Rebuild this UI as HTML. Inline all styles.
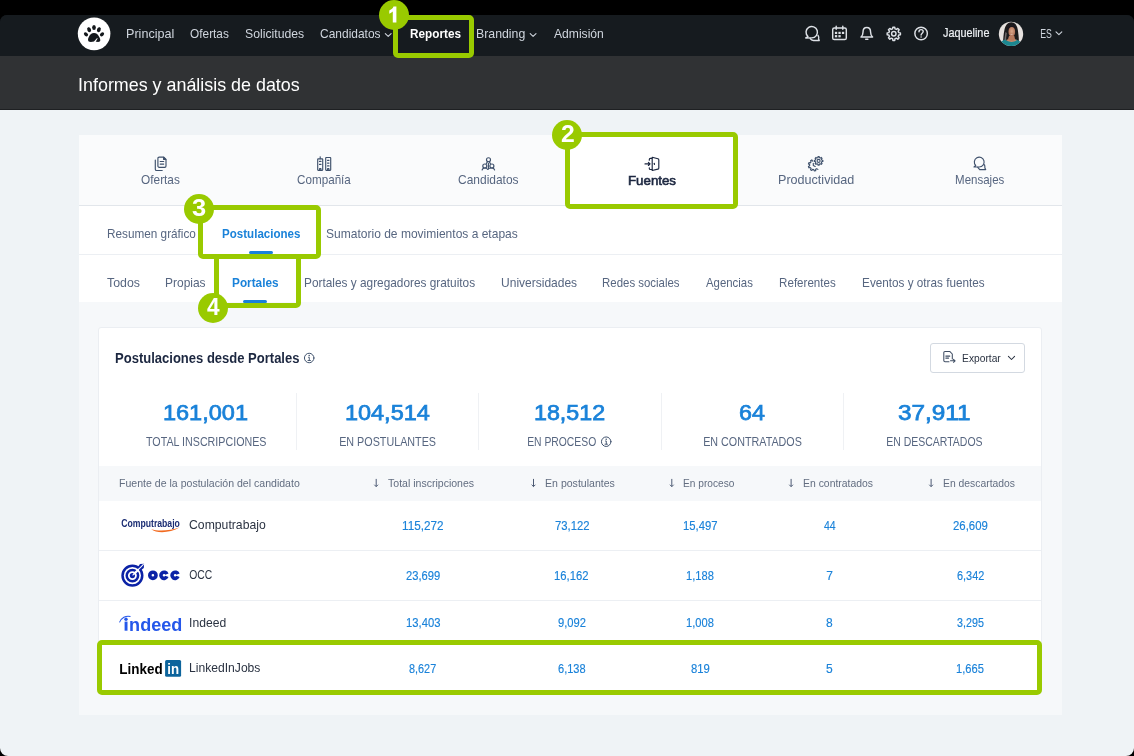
<!DOCTYPE html>
<html lang="es"><head><meta charset="utf-8"><title>Informes y análisis de datos</title>
<style>
*{box-sizing:border-box;margin:0;padding:0}
html,body{width:1134px;height:756px;overflow:hidden;background:#000;font-family:"Liberation Sans",sans-serif}
.a{position:absolute}
.win{position:absolute;left:0;top:15px;width:1134px;height:741px;background:linear-gradient(#161b1f 0,#161b1f 41px,#303234 41px,#303234 95px,#eff3f6 95px);border-radius:7px 7px 8px 8px;overflow:hidden}
.nav{position:absolute;left:0;top:0;width:1134px;height:41px;background:#161b1f}
.hdr{position:absolute;left:0;top:41px;width:1134px;height:54px;background:#303234;border-bottom:1px solid #1e2022}
.t{position:absolute;white-space:pre;line-height:20px;height:20px}
.card{position:absolute;left:79px;top:135px;width:983px;height:580px;background:#f6f8fa}
.tabs{position:absolute;left:79px;top:135px;width:983px;height:71px;background:#fafbfc;border-bottom:1px solid #e2e6eb}
.tabact{position:absolute;left:570.2px;top:134.7px;width:163.6px;height:70.3px;background:#fff}
.row2{position:absolute;left:79px;top:206px;width:983px;height:49px;background:#fff;border-bottom:1px solid #eceff3}
.row3{position:absolute;left:79px;top:255px;width:983px;height:47px;background:#fff}
.inner{position:absolute;left:98px;top:327px;width:944px;height:364px;background:#fff;border:1px solid #ebeef2;border-radius:3px}
.div{position:absolute;top:393px;width:1px;height:57px;background:#eff1f4}
.thead{position:absolute;left:99px;top:466px;width:942px;height:35px;background:#f6f8fa}
.sep{position:absolute;left:99px;width:942px;height:1px;background:#eceff3}
.ul{position:absolute;height:3px;border-radius:1.5px;background:#1a82d9}
.btn{position:absolute;left:930px;top:343.2px;width:95px;height:29.7px;border:1px solid #d3d9e1;border-radius:3px;background:#fff}
.gb{position:absolute;border:5px solid #99ca00;border-radius:5px}
.bd{position:absolute;width:30.2px;height:30.2px;border-radius:50%;background:#99ca00;color:#fff;font-weight:700;font-size:23.4px;line-height:27.8px;text-align:center}
</style></head><body>
<div class="win">
  <div class="nav"></div>
  <div class="hdr"></div>
</div>
<div class="card"></div>
<div class="tabs"></div>
<div class="tabact"></div>
<div class="row2"></div>
<div class="row3"></div>
<div class="inner"></div>
<div class="div" style="left:296.3px"></div>
<div class="div" style="left:478.1px"></div>
<div class="div" style="left:660.5px"></div>
<div class="div" style="left:842.8px"></div>
<div class="thead"></div>
<div class="sep" style="top:549.7px"></div>
<div class="sep" style="top:599.7px"></div>
<div class="ul" style="left:249.2px;top:251.2px;width:23.6px"></div>
<div class="ul" style="left:243.3px;top:300px;width:23.7px"></div>
<div class="btn"></div>
<svg class="a" style="left:0;top:0;will-change:transform" width="1134" height="756" viewBox="0 0 1134 756" fill="none">
<!-- logo -->
<circle cx="94.1" cy="33.85" r="16.3" fill="#fff"/>
<g fill="#14181c">
<ellipse cx="94" cy="27.5" rx="1.85" ry="2.6"/>
<ellipse cx="89.1" cy="29.7" rx="1.85" ry="2.55" transform="rotate(-22 89.1 29.6)"/>
<ellipse cx="98.9" cy="29.7" rx="1.85" ry="2.55" transform="rotate(22 98.9 29.6)"/>
<ellipse cx="85.9" cy="34.4" rx="1.7" ry="2.35" transform="rotate(-50 85.9 34.3)"/>
<ellipse cx="102.1" cy="34.4" rx="1.7" ry="2.35" transform="rotate(50 102.1 34.3)"/>
<path d="M94 33c2.4 0 4.2 1.6 5.4 4.2c.9 1.9 1.2 3.3.6 4.1c-.7.9-2.4.7-4.3.5l1.9-3.4l-.5-.4l-3.1 3.6c-1.700.200-4.200.600-5.300-.200c-1-.800-.800-2.400.100-4.300C90 34.500 91.700 33 94 33z"/>
</g>
<!-- nav chevrons -->
<g stroke="#cfd5dd" stroke-width="1.1" stroke-linecap="round" stroke-linejoin="round">
<path d="M385.300 33.600l2.900 2.800l2.900-2.800"/>
<path d="M530.200 33.600l2.900 2.800l2.900-2.800"/>
<path d="M1056 31.800l2.900 2.900l2.900-2.900"/>
</g>
<!-- nav icons -->
<g stroke="#dde1e6" stroke-width="1.45" stroke-linecap="round" stroke-linejoin="round">
<!-- chat -->
<path d="M808 36.500A5.700 5.700 0 1 1 811.800 37.900L805.800 37.900Z"/>
<path d="M818 35.300Q819.300 37.300 818.600 38.900L819.200 40.500L813.500 40.500Q811.300 40.300 810.200 38.600"/>
<!-- calendar -->
<rect x="832.700" y="28" width="13.600" height="11.500" rx="1.600"/>
<path d="M836.200 26.200v3M842.800 26.200v3"/>
<!-- bell -->
<path d="M861 37h11.600c-1.600-1.300-2-2.700-2-4.800c0-2.700-1.500-4.700-3.800-4.700s-3.800 2-3.800 4.700c0 2.100-.4 3.500-2 4.800z"/>
<path d="M865.700 39.200h2.200"/>
<!-- help -->
<circle cx="921.100" cy="33.500" r="6.250"/>
<path d="M919 31.700c0-1.300 1-2.100 2.100-2.100s2.100.8 2.100 2c0 1.500-2.100 1.700-2.100 3.400"/>
</g>
<g fill="#dde1e6">
<rect x="834.900" y="31.800" width="2.300" height="2.200"/><rect x="838.400" y="31.800" width="2.300" height="2.200"/><rect x="841.900" y="31.800" width="2.300" height="2.200"/>
<rect x="834.900" y="35.100" width="2.300" height="2.200"/><rect x="838.400" y="35.100" width="2.300" height="2.200"/>
<circle cx="921.100" cy="37" r=".8"/>
</g>
<!-- gear -->
<g stroke="#dde1e6" stroke-width="1.450" stroke-linejoin="round">
<circle cx="893.800" cy="33.800" r="2.200"/>
<path d="M898.76 32.61L900.43 32.86L900.43 34.74L898.76 34.99L898.15 36.46L899.16 37.82L897.82 39.16L896.46 38.15L894.99 38.76L894.74 40.43L892.86 40.43L892.61 38.76L891.14 38.15L889.78 39.16L888.44 37.82L889.45 36.46L888.84 34.99L887.17 34.74L887.17 32.86L888.84 32.61L889.45 31.14L888.44 29.78L889.78 28.44L891.14 29.45L892.61 28.84L892.86 27.17L894.74 27.17L894.99 28.84L896.46 29.45L897.82 28.44L899.16 29.78L898.15 31.14Z"/>
</g>
<!-- avatar -->
<defs>
<clipPath id="av"><circle cx="1011" cy="33.900" r="12.200"/></clipPath>
<filter id="bl" x="-20%" y="-20%" width="140%" height="140%"><feGaussianBlur stdDeviation=".55"/></filter>
<radialGradient id="fc" cx=".5" cy=".45" r=".6"><stop offset="0" stop-color="#dba789"/><stop offset="1" stop-color="#a96a50"/></radialGradient>
</defs>
<g clip-path="url(#av)">
<rect x="997" y="20" width="28" height="28" fill="#e6e1de"/>
<g filter="url(#bl)">
<path d="M1003 44c.200-5 .500-10 1.400-14c1-4.800 3.300-7.800 6.900-7.800s5.800 3 6.500 7.500c.600 4.300 1.300 9 1 14.300z" fill="#1e1a1b"/>
<path d="M1004.300 42c.200-3 .600-7 1.200-10l1.300 1c-.500 3-.800 6-.800 9z" fill="#6f6a6b"/>
<ellipse cx="1011.800" cy="31.700" rx="3.300" ry="4.800" fill="url(#fc)"/>
<path d="M1007.600 30c.300-3.800 1.800-5.600 4-5.600s3.500 1.600 3.900 4.600c-1.300-1.600-2.800-2.400-4.300-2.400s-2.800 1.200-3.600 3.400z" fill="#1e1a1b"/>
<path d="M1009.700 33.900q1.900 1.300 3.800 0q-1.900 2.100-3.800 0z" fill="#f6ece8"/>
<path d="M1009 36h5.300l1.200 5h-8z" fill="#b87a5d"/>
<path d="M998 48c.500-5 3-7.300 7.500-8.500c1.500 2 8.500 2 10.500 0c4 1.200 6.500 3.500 7 8.500z" fill="#1f8790"/>
<path d="M1007 39.300q4.300 2.700 9 0l.6 1.300q-5 2.800-10.200 0z" fill="#c58b6d"/>
</g>
</g>
<!-- tab icons -->
<g stroke="#3f516c" stroke-width="1.150" stroke-linecap="round" stroke-linejoin="round">
<!-- ofertas -->
<path d="M159.200 157.100h4.600l2.200 2.200v6.700a1.300 1.300 0 0 1-1.300 1.300h-5.500a1.300 1.300 0 0 1-1.300-1.300v-7.600a1.300 1.300 0 0 1 1.300-1.300z"/>
<path d="M163.600 157.300v2.200h2.200z" fill="#3f516c"/>
<path d="M160.200 161.500h3.500M160.200 164.100h3.500"/>
<path d="M155.300 160v9.200a1.300 1.300 0 0 0 1.300 1.300h5.600"/>
<!-- compania -->
<rect x="317.700" y="158.800" width="5" height="11.500" rx=".5"/>
<rect x="325.700" y="157.500" width="5" height="12.800" rx=".5"/>
<path d="M320.200 156.700v2"/>
<path d="M319.500 161.400h1.500M319.500 164.400h1.500M327.500 160.300h1.500M327.500 163.100h1.500M327.500 165.900h1.500"/>
<path d="M319.600 170v-1.500h1.300v1.500M327.600 170v-1.500h1.300v1.500"/>
<!-- candidatos -->
<circle cx="488.500" cy="159.700" r="2"/>
<circle cx="484.800" cy="166" r="2"/>
<circle cx="491.900" cy="166" r="2"/>
<path d="M486.300 163.600l1.300-2.100M490.400 163.600l-1.300-2.100M488.400 163.200v5.600"/>
<path d="M482.100 170c.3-1.300 1.400-2 2.700-2s2.400.7 2.900 1.500c.5-.8 2.500-1.500 4.200-1.500c1.300 0 2.400.7 2.700 2"/>
<!-- productividad -->
<circle cx="818.600" cy="160.900" r="1.500"/>
<path d="M821.81 160.13L822.86 160.29L822.86 161.51L821.81 161.67L821.41 162.62L822.04 163.48L821.18 164.34L820.32 163.71L819.37 164.11L819.21 165.16L817.99 165.16L817.83 164.11L816.88 163.71L816.02 164.34L815.16 163.48L815.79 162.62L815.39 161.67L814.34 161.51L814.34 160.29L815.39 160.13L815.79 159.18L815.16 158.32L816.02 157.46L816.88 158.09L817.83 157.69L817.99 156.64L819.21 156.64L819.37 157.69L820.32 158.09L821.18 157.46L822.04 158.32L821.41 159.18Z"/>
<path d="M817.87 169.38L816.71 168.67L815.65 169.28L815.69 170.65L814.28 170.89L813.85 169.60L812.64 169.38L811.79 170.45L810.55 169.74L811.06 168.47L810.27 167.53L808.93 167.81L808.44 166.46L809.64 165.81L809.64 164.59L808.44 163.94L808.93 162.59L810.27 162.87L811.06 161.93L810.55 160.66L811.79 159.95L812.64 161.02"/>
<path d="M813.300 163.300v2.300l1.900.9"/>
<!-- mensajes -->
<path d="M975.700 165.500A4.900 4.900 0 1 1 979.200 167L974 167Z"/>
<path d="M984.500 164.700Q985 166.500 984.900 168L985.700 169.600L979.700 169.600L977.800 167.300"/>
</g>
<!-- fuentes (dark) -->
<g stroke="#1c2740" stroke-width="1.150" stroke-linecap="round" stroke-linejoin="round">
<path d="M652.200 157.200l5.700 1.500a1.200 1.200 0 0 1 .9 1.200v8a1.200 1.200 0 0 1-.9 1.200l-5.700 1.400z"/>
<path d="M651.800 158.400h-1.500a1 1 0 0 0-1 1v.8M651.800 169.500h-1.500a1 1 0 0 1-1-1v-.8"/>
<path d="M645 163.900h4.800M648.400 162.300l1.700 1.600l-1.700 1.600"/>
<path d="M654.400 163.300v1.200"/>
</g>
<!-- info icons -->
<g stroke="#3f516c" stroke-width="1" stroke-linecap="round">
<circle cx="309.200" cy="358" r="4.750"/>
<path d="M308.500 357.300h.8v3.100M308 360.500h2.500" stroke-width=".9"/>
<circle cx="606.200" cy="441.700" r="4.750"/>
<path d="M605.500 441h.8v3.100M605 444.200h2.500" stroke-width=".9"/>
</g>
<circle cx="309.200" cy="355.600" r=".75" fill="#3f516c"/>
<circle cx="606.200" cy="439.300" r=".75" fill="#3f516c"/>
<!-- export -->
<g stroke="#3f4d63" stroke-width="1.050" stroke-linecap="round" stroke-linejoin="round">
<path d="M952.300 359v-5l-2.600-2.600h-4.700a1.200 1.200 0 0 0-1.200 1.200v8a1.200 1.200 0 0 0 1.200 1.200h4"/>
<path d="M945.800 356.100h4M945.800 358.100h2.800"/>
<path d="M950.500 360.800h4.500M953.500 359.300l1.600 1.500l-1.600 1.500"/>
<path d="M1008.400 356.400l3.100 3.100l3.100-3.100" stroke="#2b3342"/>
</g>
<!-- sort arrows -->
<g stroke="#4d5b74" stroke-width="1" stroke-linecap="round" stroke-linejoin="round">
<path d="M376.200 479.300v7M374.600 485l1.600 1.600l1.600-1.600"/>
<path d="M533.500 479.300v7M531.900 485l1.600 1.600l1.600-1.600"/>
<path d="M671.800 479.300v7M670.200 485l1.600 1.600l1.600-1.600"/>
<path d="M791.100 479.300v7M789.500 485l1.600 1.600l1.600-1.600"/>
<path d="M931.100 479.300v7M929.500 485l1.600 1.600l1.600-1.600"/>
</g>
<!-- Computrabajo logo -->
<text x="121.200" y="527.200" font-family="Liberation Sans, sans-serif" font-weight="700" font-size="10.200" fill="#1b2d73" textLength="58.700" lengthAdjust="spacingAndGlyphs">Computrabajo</text>
<path d="M151.200 529.300C157 533.600 170 533.100 179.800 527.300C170 531 158 531.300 151.200 529.300z" fill="#f26a1f"/>
<!-- OCC logo -->
<g stroke="#0b22a6" fill="none">
<circle cx="132.400" cy="575.600" r="9.850" stroke-width="2.500"/>
<circle cx="132.400" cy="575.600" r="5.700" stroke-width="2.500"/>
<circle cx="132.400" cy="575.600" r="2.600" fill="#0b22a6" stroke="none"/>
<path d="M134 574L142 566" stroke="#fff" stroke-width="2.100"/>
<path d="M137.700 567.300l2.300-3.300l4.100-.300l-.300 4.300l-3.200 2.400l-1.500-.200z" fill="#0b22a6" stroke="none"/>
<path d="M132.600 575.400L143.700 564.200" stroke="#fff" stroke-width="1.050"/>
<circle cx="152.900" cy="575.300" r="3.100" stroke-width="3.600"/>
<path d="M166.900 574.150a3.100 3.100 0 1 0 0 2.300" stroke-width="3.600"/>
<path d="M178 574.150a3.100 3.100 0 1 0 0 2.300" stroke-width="3.600"/>
</g>
<!-- indeed logo -->
<text x="129.100" y="630.700" font-family="Liberation Sans, sans-serif" font-weight="700" font-size="17.800" fill="#2557ea" textLength="53.200" lengthAdjust="spacingAndGlyphs">ndeed</text>
<rect x="124.600" y="621.600" width="2.900" height="9.100" fill="#2557ea"/>
<circle cx="126" cy="619.300" r="1.700" fill="#2557ea"/>
<path d="M119.500 622.400c1.700-4.500 6.300-7.200 11-5.900" stroke="#2557ea" stroke-width="1.050"/>
<!-- linkedin logo -->
<text x="119.300" y="673.600" font-family="Liberation Sans, sans-serif" font-weight="700" font-size="14.600" fill="#000" textLength="43.300" lengthAdjust="spacingAndGlyphs">Linked</text>
<rect x="165.100" y="660" width="16" height="16.700" rx="1.500" fill="#0d649c"/>
<text x="167.300" y="673.600" font-family="Liberation Sans, sans-serif" font-weight="700" font-size="14.600" fill="#fff" textLength="11.800" lengthAdjust="spacingAndGlyphs">in</text>
</svg>

<div class="a" style="left:0;top:0;width:1134px;height:756px;will-change:transform">
<span class="t" style="left:125.60px;top:23.50px;font-size:13px;font-weight:400;color:#cfd5dd;transform:scaleX(0.9670);transform-origin:1.00px 0;">Principal</span>
<span class="t" style="left:189.61px;top:23.50px;font-size:13px;font-weight:400;color:#cfd5dd;transform:scaleX(0.9095);transform-origin:0.83px 0;">Ofertas</span>
<span class="t" style="left:244.57px;top:23.50px;font-size:13px;font-weight:400;color:#cfd5dd;transform:scaleX(0.9412);transform-origin:0.95px 0;">Solicitudes</span>
<span class="t" style="left:319.65px;top:23.50px;font-size:13px;font-weight:400;color:#cfd5dd;transform:scaleX(0.9189);transform-origin:0.85px 0;">Candidatos</span>
<span class="t" style="left:476.21px;top:23.50px;font-size:13px;font-weight:400;color:#cfd5dd;transform:scaleX(0.9459);transform-origin:1.00px 0;">Branding</span>
<span class="t" style="left:554.40px;top:23.50px;font-size:13px;font-weight:400;color:#cfd5dd;transform:scaleX(0.9321);transform-origin:0.00px 0;">Admisión</span>
<span class="t" style="left:409.92px;top:23.94px;font-size:12.3px;font-weight:700;color:#ffffff;transform:scaleX(0.9559);transform-origin:0.91px 0;">Reportes</span>
<span class="t" style="left:943.40px;top:23.34px;font-size:12px;font-weight:400;color:#eef1f4;transform:scaleX(0.9035);transform-origin:0.00px 0;-webkit-text-stroke:0.2px #eef1f4;">Jaqueline</span>
<span class="t" style="left:1039.51px;top:23.84px;font-size:12px;font-weight:400;color:#cfd5dd;transform:scaleX(0.7271);transform-origin:0.99px 0;">ES</span>
<span class="t" style="left:78.19px;top:74.59px;font-size:18.5px;font-weight:400;color:#ffffff;transform:scaleX(0.9666);transform-origin:1.85px 0;">Informes y análisis de datos</span>
<span class="t" style="left:141.01px;top:169.50px;font-size:13px;font-weight:400;color:#576680;transform:scaleX(0.9099);transform-origin:0.83px 0;">Ofertas</span>
<span class="t" style="left:296.90px;top:169.50px;font-size:13px;font-weight:400;color:#576680;transform:scaleX(0.8958);transform-origin:0.85px 0;">Compañía</span>
<span class="t" style="left:457.85px;top:169.50px;font-size:13px;font-weight:400;color:#576680;transform:scaleX(0.9189);transform-origin:0.85px 0;">Candidatos</span>
<span class="t" style="left:777.60px;top:169.50px;font-size:13px;font-weight:400;color:#576680;transform:scaleX(0.9667);transform-origin:1.00px 0;">Productividad</span>
<span class="t" style="left:954.75px;top:169.50px;font-size:13px;font-weight:400;color:#576680;transform:scaleX(0.8840);transform-origin:1.00px 0;">Mensajes</span>
<span class="t" style="left:628.38px;top:170.50px;font-size:13px;font-weight:400;color:#1c2740;transform:scaleX(1.0222);transform-origin:0.88px 0;-webkit-text-stroke:0.6px #1c2740;">Fuentes</span>
<span class="t" style="left:107.13px;top:223.50px;font-size:13px;font-weight:400;color:#576680;transform:scaleX(0.9033);transform-origin:1.00px 0;">Resumen gráfico</span>
<span class="t" style="left:221.98px;top:223.70px;font-size:12.4px;font-weight:700;color:#1a82d9;transform:scaleX(0.9329);transform-origin:0.91px 0;">Postulaciones</span>
<span class="t" style="left:325.78px;top:223.50px;font-size:13px;font-weight:400;color:#576680;transform:scaleX(0.9243);transform-origin:0.95px 0;">Sumatorio de movimientos a etapas</span>
<span class="t" style="left:106.80px;top:272.50px;font-size:13px;font-weight:400;color:#576680;transform:scaleX(0.9491);transform-origin:0.00px 0;">Todos</span>
<span class="t" style="left:165.45px;top:272.50px;font-size:13px;font-weight:400;color:#576680;transform:scaleX(0.9191);transform-origin:1.00px 0;">Propias</span>
<span class="t" style="left:304.31px;top:272.50px;font-size:13px;font-weight:400;color:#576680;transform:scaleX(0.9100);transform-origin:1.00px 0;">Portales y agregadores gratuitos</span>
<span class="t" style="left:500.85px;top:272.50px;font-size:13px;font-weight:400;color:#576680;transform:scaleX(0.9229);transform-origin:1.00px 0;">Universidades</span>
<span class="t" style="left:602.40px;top:272.50px;font-size:13px;font-weight:400;color:#576680;transform:scaleX(0.8778);transform-origin:1.00px 0;">Redes sociales</span>
<span class="t" style="left:706.20px;top:272.50px;font-size:13px;font-weight:400;color:#576680;transform:scaleX(0.8758);transform-origin:0.00px 0;">Agencias</span>
<span class="t" style="left:778.76px;top:272.50px;font-size:13px;font-weight:400;color:#576680;transform:scaleX(0.8892);transform-origin:1.00px 0;">Referentes</span>
<span class="t" style="left:861.72px;top:272.50px;font-size:13px;font-weight:400;color:#576680;transform:scaleX(0.9018);transform-origin:1.00px 0;">Eventos y otras fuentes</span>
<span class="t" style="left:231.91px;top:272.70px;font-size:12.4px;font-weight:700;color:#1a82d9;transform:scaleX(0.9510);transform-origin:0.91px 0;">Portales</span>
<span class="t" style="left:115.24px;top:348.62px;font-size:13.8px;font-weight:700;color:#1c2740;transform:scaleX(0.9431);transform-origin:0.96px 0;">Postulaciones desde Portales</span>
<span class="t" style="left:962.13px;top:348.19px;font-size:11px;font-weight:400;color:#2b3342;transform:scaleX(0.9300);transform-origin:0.95px 0;">Exportar</span>
<span class="t" style="left:163.40px;top:403.27px;font-size:22.3px;font-weight:400;color:#1a82d9;transform:scaleX(1.0554);transform-origin:1.00px 0;-webkit-text-stroke:0.75px #1a82d9;">161,001</span>
<span class="t" style="left:345.40px;top:403.27px;font-size:22.3px;font-weight:400;color:#1a82d9;transform:scaleX(1.0528);transform-origin:1.00px 0;-webkit-text-stroke:0.75px #1a82d9;">104,514</span>
<span class="t" style="left:534.40px;top:403.27px;font-size:22.3px;font-weight:400;color:#1a82d9;transform:scaleX(1.0434);transform-origin:1.00px 0;-webkit-text-stroke:0.75px #1a82d9;">18,512</span>
<span class="t" style="left:739.45px;top:403.27px;font-size:22.3px;font-weight:400;color:#1a82d9;transform:scaleX(1.0462);transform-origin:0.89px 0;-webkit-text-stroke:0.75px #1a82d9;">64</span>
<span class="t" style="left:898.10px;top:403.27px;font-size:22.3px;font-weight:400;color:#1a82d9;transform:scaleX(1.0906);transform-origin:0.84px 0;-webkit-text-stroke:0.75px #1a82d9;">37,911</span>
<span class="t" style="left:145.80px;top:431.83px;font-size:12.6px;font-weight:400;color:#576680;transform:scaleX(0.8495);transform-origin:0.00px 0;">TOTAL INSCRIPCIONES</span>
<span class="t" style="left:339.40px;top:431.83px;font-size:12.6px;font-weight:400;color:#576680;transform:scaleX(0.8547);transform-origin:1.00px 0;">EN POSTULANTES</span>
<span class="t" style="left:527.20px;top:431.83px;font-size:12.6px;font-weight:400;color:#576680;transform:scaleX(0.8221);transform-origin:1.00px 0;">EN PROCESO</span>
<span class="t" style="left:703.20px;top:431.83px;font-size:12.6px;font-weight:400;color:#576680;transform:scaleX(0.8533);transform-origin:1.00px 0;">EN CONTRATADOS</span>
<span class="t" style="left:886.00px;top:431.83px;font-size:12.6px;font-weight:400;color:#576680;transform:scaleX(0.8333);transform-origin:1.00px 0;">EN DESCARTADOS</span>
<span class="t" style="left:118.87px;top:473.15px;font-size:11.1px;font-weight:400;color:#626d80;transform:scaleX(0.9514);transform-origin:0.95px 0;">Fuente de la postulación del candidato</span>
<span class="t" style="left:388.40px;top:473.15px;font-size:11.1px;font-weight:400;color:#626d80;transform:scaleX(0.9498);transform-origin:0.00px 0;">Total inscripciones</span>
<span class="t" style="left:545.08px;top:473.15px;font-size:11.1px;font-weight:400;color:#626d80;transform:scaleX(0.9509);transform-origin:0.95px 0;">En postulantes</span>
<span class="t" style="left:682.78px;top:473.15px;font-size:11.1px;font-weight:400;color:#626d80;transform:scaleX(0.9132);transform-origin:0.95px 0;">En proceso</span>
<span class="t" style="left:803.11px;top:473.15px;font-size:11.1px;font-weight:400;color:#626d80;transform:scaleX(0.9376);transform-origin:0.95px 0;">En contratados</span>
<span class="t" style="left:942.73px;top:473.15px;font-size:11.1px;font-weight:400;color:#626d80;transform:scaleX(0.9326);transform-origin:0.95px 0;">En descartados</span>
<span class="t" style="left:188.59px;top:514.50px;font-size:13px;font-weight:400;color:#2b3342;transform:scaleX(0.9387);transform-origin:0.85px 0;">Computrabajo</span>
<span class="t" style="left:189.31px;top:564.70px;font-size:13px;font-weight:400;color:#2b3342;transform:scaleX(0.7956);transform-origin:0.83px 0;">OCC</span>
<span class="t" style="left:189.00px;top:612.90px;font-size:13px;font-weight:400;color:#2b3342;transform:scaleX(0.9324);transform-origin:1.00px 0;">Indeed</span>
<span class="t" style="left:189.04px;top:657.80px;font-size:13px;font-weight:400;color:#2b3342;transform:scaleX(0.9312);transform-origin:1.00px 0;">LinkedInJobs</span>
<span class="t" style="left:402.21px;top:516.04px;font-size:12px;font-weight:400;color:#1a82d9;transform:scaleX(0.9752);transform-origin:0.89px 0;-webkit-text-stroke:0.15px #1a82d9;">115,272</span>
<span class="t" style="left:554.60px;top:516.04px;font-size:12px;font-weight:400;color:#1a82d9;transform:scaleX(0.9413);transform-origin:0.00px 0;-webkit-text-stroke:0.15px #1a82d9;">73,122</span>
<span class="t" style="left:683.45px;top:516.04px;font-size:12px;font-weight:400;color:#1a82d9;transform:scaleX(0.9402);transform-origin:0.89px 0;-webkit-text-stroke:0.15px #1a82d9;">15,497</span>
<span class="t" style="left:824.40px;top:516.04px;font-size:12px;font-weight:400;color:#1a82d9;transform:scaleX(0.8775);transform-origin:0.00px 0;-webkit-text-stroke:0.15px #1a82d9;">44</span>
<span class="t" style="left:953.20px;top:516.04px;font-size:12px;font-weight:400;color:#1a82d9;transform:scaleX(0.9481);transform-origin:0.00px 0;-webkit-text-stroke:0.15px #1a82d9;">26,609</span>
<span class="t" style="left:406.40px;top:565.84px;font-size:12px;font-weight:400;color:#1a82d9;transform:scaleX(0.9315);transform-origin:0.00px 0;-webkit-text-stroke:0.15px #1a82d9;">23,699</span>
<span class="t" style="left:554.06px;top:565.84px;font-size:12px;font-weight:400;color:#1a82d9;transform:scaleX(0.9380);transform-origin:0.89px 0;-webkit-text-stroke:0.15px #1a82d9;">16,162</span>
<span class="t" style="left:686.10px;top:565.84px;font-size:12px;font-weight:400;color:#1a82d9;transform:scaleX(0.9274);transform-origin:0.89px 0;-webkit-text-stroke:0.15px #1a82d9;">1,188</span>
<span class="t" style="left:826.17px;top:565.84px;font-size:12px;font-weight:400;color:#1a82d9;-webkit-text-stroke:0.15px #1a82d9;">7</span>
<span class="t" style="left:957.20px;top:565.84px;font-size:12px;font-weight:400;color:#1a82d9;transform:scaleX(0.9102);transform-origin:0.00px 0;-webkit-text-stroke:0.15px #1a82d9;">6,342</span>
<span class="t" style="left:406.26px;top:613.24px;font-size:12px;font-weight:400;color:#1a82d9;transform:scaleX(0.9376);transform-origin:0.89px 0;-webkit-text-stroke:0.15px #1a82d9;">13,403</span>
<span class="t" style="left:558.20px;top:613.24px;font-size:12px;font-weight:400;color:#1a82d9;transform:scaleX(0.9306);transform-origin:0.00px 0;-webkit-text-stroke:0.15px #1a82d9;">9,092</span>
<span class="t" style="left:686.10px;top:613.24px;font-size:12px;font-weight:400;color:#1a82d9;transform:scaleX(0.9274);transform-origin:0.89px 0;-webkit-text-stroke:0.15px #1a82d9;">1,008</span>
<span class="t" style="left:826.04px;top:613.24px;font-size:12px;font-weight:400;color:#1a82d9;-webkit-text-stroke:0.15px #1a82d9;">8</span>
<span class="t" style="left:957.41px;top:613.24px;font-size:12px;font-weight:400;color:#1a82d9;transform:scaleX(0.8915);transform-origin:0.79px 0;-webkit-text-stroke:0.15px #1a82d9;">3,295</span>
<span class="t" style="left:409.40px;top:659.04px;font-size:12px;font-weight:400;color:#1a82d9;transform:scaleX(0.9045);transform-origin:0.00px 0;-webkit-text-stroke:0.15px #1a82d9;">8,627</span>
<span class="t" style="left:558.20px;top:659.04px;font-size:12px;font-weight:400;color:#1a82d9;transform:scaleX(0.9204);transform-origin:0.00px 0;-webkit-text-stroke:0.15px #1a82d9;">6,138</span>
<span class="t" style="left:691.40px;top:659.04px;font-size:12px;font-weight:400;color:#1a82d9;transform:scaleX(0.9416);transform-origin:0.00px 0;-webkit-text-stroke:0.15px #1a82d9;">819</span>
<span class="t" style="left:826.02px;top:659.04px;font-size:12px;font-weight:400;color:#1a82d9;-webkit-text-stroke:0.15px #1a82d9;">5</span>
<span class="t" style="left:956.10px;top:659.04px;font-size:12px;font-weight:400;color:#1a82d9;transform:scaleX(0.9274);transform-origin:0.89px 0;-webkit-text-stroke:0.15px #1a82d9;">1,665</span>
</div>
<!-- annotations -->
<div class="gb" style="left:393px;top:15px;width:81px;height:43px"></div>
<div class="gb" style="left:565px;top:132px;width:173px;height:76.7px"></div>
<div class="gb" style="left:198.3px;top:205px;width:122.5px;height:53.7px"></div>
<div class="gb" style="left:214px;top:254px;width:87px;height:54px"></div>
<div class="gb" style="left:97.2px;top:640px;width:944.5px;height:55px"></div>
<div class="bd" style="left:379.0px;top:-0.5px"><svg class="a" style="left:0;top:0" width="30.2" height="30.2" viewBox="0 0 30.2 30.2"><path d="M17.400 22.500h-3.600v-10.900q-1.600 1.500-3.500 2.200v-3.400q1.100-.400 2.400-1.400q1.300-1.100 1.800-2.600h2.900z" fill="#fff"/></svg></div>
<div class="bd" style="left:551.9px;top:119.8px"></div>
<div class="bd" style="left:183.8px;top:193.8px"></div>
<div class="bd" style="left:197.9px;top:292.9px"></div>
<div class="a" style="left:0;top:0;width:1134px;height:756px;will-change:transform">
<span class="t" style="left:560.54px;top:123.93px;font-size:23.3px;font-weight:700;color:#ffffff;transform:scaleX(1.0606);transform-origin:0.91px 0;">2</span>
<span class="t" style="left:191.62px;top:198.03px;font-size:23.3px;font-weight:700;color:#ffffff;transform:scaleX(1.0934);transform-origin:0.87px 0;">3</span>
<span class="t" style="left:206.60px;top:296.83px;font-size:23.3px;font-weight:700;color:#ffffff;transform:scaleX(0.9696);transform-origin:0.00px 0;">4</span>
</div>
</body></html>
